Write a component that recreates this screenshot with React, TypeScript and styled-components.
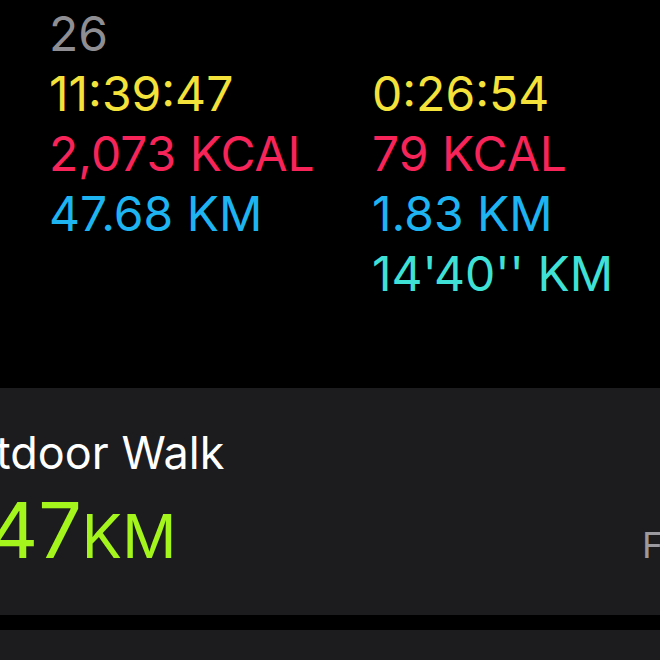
import styled, { createGlobalStyle } from "styled-components";

const GlobalStyle = createGlobalStyle`
  html, body {
    margin: 0;
    padding: 0;
    background: #000;
  }
  body {
    font-family: Inter, "Noto Sans", "Liberation Sans", sans-serif;
    -webkit-font-smoothing: antialiased;
  }
`;

const colors = {
  day: "#8e8e93",
  time: "#f4e23a",
  kcal: "#f7245a",
  dist: "#1db4f1",
  pace: "#3fe1d6",
  walk: "#a3f51c",
};

type Tone = keyof typeof colors;

const summary: { left?: [Tone, string]; right?: [Tone, string] }[] = [
  { left: ["day", "26"] },
  { left: ["time", "11:39:47"], right: ["time", "0:26:54"] },
  { left: ["kcal", "2,073 KCAL"], right: ["kcal", "79 KCAL"] },
  { left: ["dist", "47.68 KM"], right: ["dist", "1.83 KM"] },
  { right: ["pace", "14'40'' KM"] },
];

export default function App() {
  return (
    <Page>
      <GlobalStyle />
      <Summary>
        {summary.map((row, i) => [
          <Stat key={`l${i}`} $tone={row.left?.[0] ?? "day"}>
            {row.left?.[1] ?? ""}
          </Stat>,
          <Stat key={`r${i}`} $tone={row.right?.[0] ?? "day"}>
            {row.right?.[1] ?? ""}
          </Stat>,
        ])}
      </Summary>

      <WorkoutCard>
        <CardRow>
          <Info>
            <Title>Outdoor Walk</Title>
            <Distance>
              1.47<Unit>KM</Unit>
            </Distance>
          </Info>
          <DateLabel>Fri</DateLabel>
        </CardRow>
      </WorkoutCard>
      <WorkoutCard />
    </Page>
  );
}

const Page = styled.div`
  width: 660px;
  height: 660px;
  overflow: hidden;
  background: #000;
`;

const Summary = styled.div`
  display: grid;
  grid-template-columns: 323px 1fr;
  padding: 4px 0 0 49px;
  margin-bottom: 84px;
`;

const Stat = styled.div<{ $tone: Tone }>`
  height: 60px;
  font-size: 48px;
  line-height: 60px;
  font-weight: 400;
  white-space: nowrap;
  color: ${(p) => colors[p.$tone]};
`;

const WorkoutCard = styled.div`
  height: 227px;
  background: #1c1c1e;
  margin-bottom: 15px;
  overflow: hidden;
`;

const CardRow = styled.div`
  display: flex;
  justify-content: space-between;
  align-items: last baseline;
  padding-top: 38px;
  margin: 0 -25px 0 -65px;
`;

const Info = styled.div`
  display: flex;
  flex-direction: column;
`;

const Title = styled.div`
  font-size: 45px;
  line-height: 54px;
  color: #fff;
  white-space: nowrap;
`;

const Distance = styled.div`
  font-size: 77px;
  line-height: 80px;
  margin-top: 10px;
  color: ${colors.walk};
  white-space: nowrap;
`;

const Unit = styled.span`
  font-size: 60px;
`;

const DateLabel = styled.div`
  font-size: 36px;
  color: #9a9a9f;
`;
